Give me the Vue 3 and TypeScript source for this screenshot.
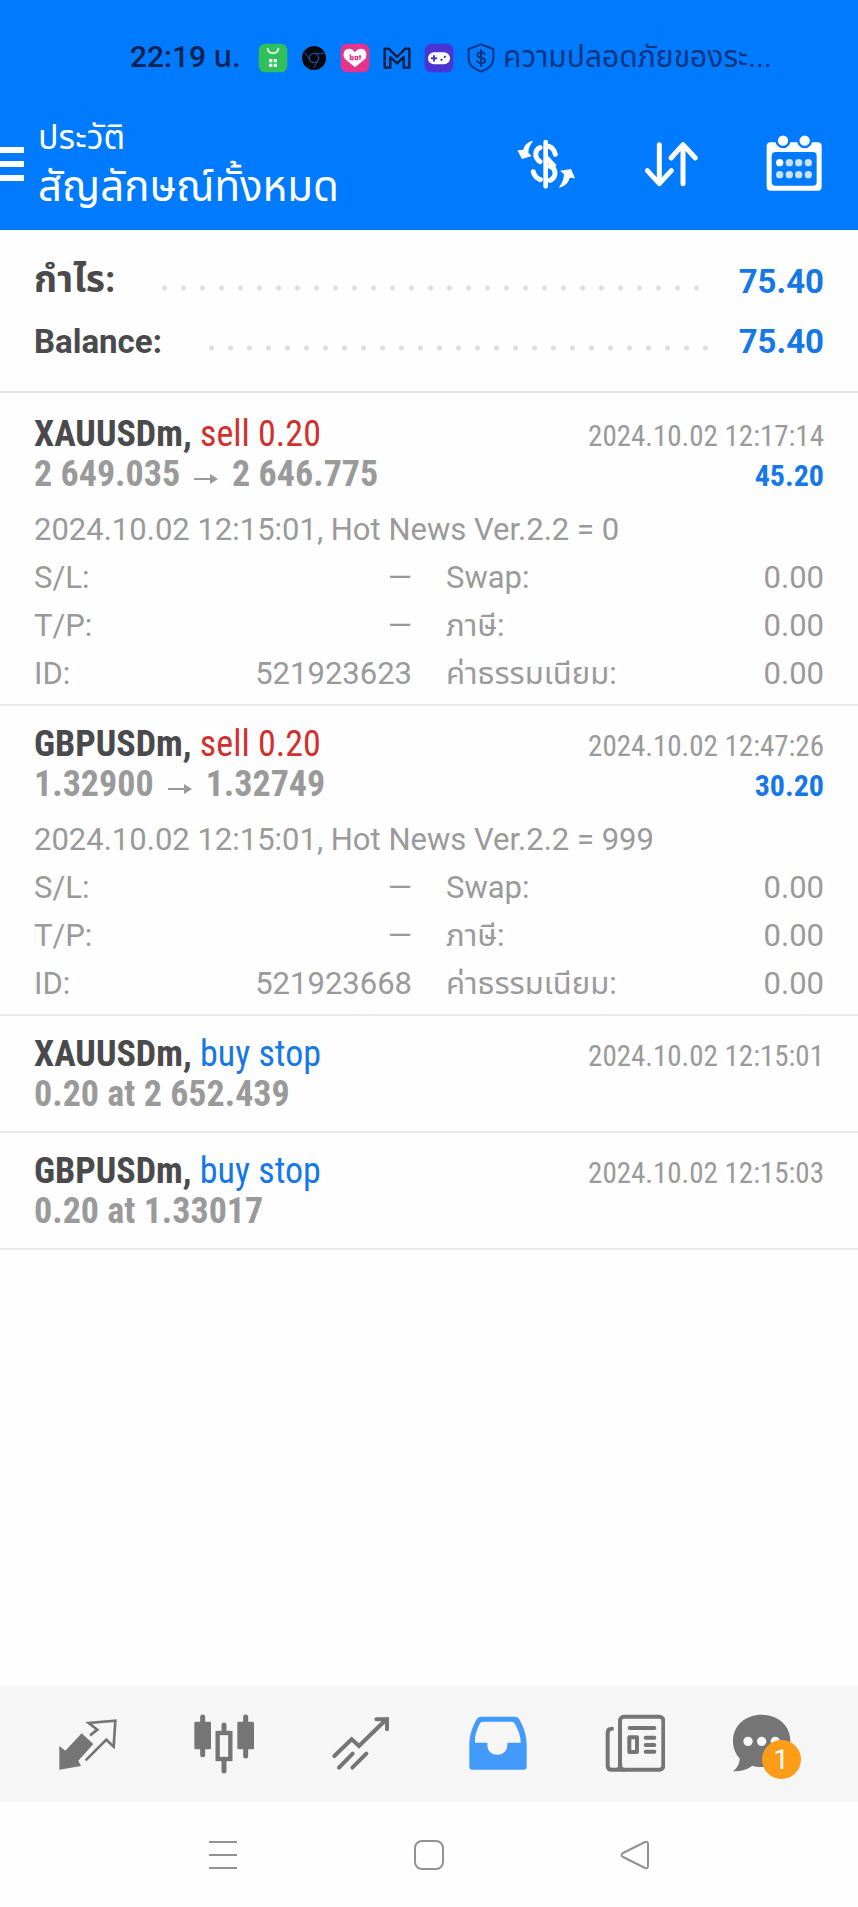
<script setup lang="ts">
interface Detail {
  label: string
  value: string
  label2: string
  value2: string
}

interface Deal {
  symbol: string
  action: string
  side: 'buy' | 'sell'
  prices: string[]
  time: string
  profit?: string
  comment?: string
  details?: Detail[]
}

const summary = [
  { label: 'กำไร:', value: '75.40', thai: true },
  { label: 'Balance:', value: '75.40', thai: false },
]

const details = (id: string): Detail[] => [
  { label: 'S/L:', value: '—', label2: 'Swap:', value2: '0.00' },
  { label: 'T/P:', value: '—', label2: 'ภาษี:', value2: '0.00' },
  { label: 'ID:', value: id, label2: 'ค่าธรรมเนียม:', value2: '0.00' },
]

const deals: Deal[] = [
  {
    symbol: 'XAUUSDm,',
    action: 'sell 0.20',
    side: 'sell',
    prices: ['2 649.035', '2 646.775'],
    time: '2024.10.02 12:17:14',
    profit: '45.20',
    comment: '2024.10.02 12:15:01, Hot News Ver.2.2 = 0',
    details: details('521923623'),
  },
  {
    symbol: 'GBPUSDm,',
    action: 'sell 0.20',
    side: 'sell',
    prices: ['1.32900', '1.32749'],
    time: '2024.10.02 12:47:26',
    profit: '30.20',
    comment: '2024.10.02 12:15:01, Hot News Ver.2.2 = 999',
    details: details('521923668'),
  },
  {
    symbol: 'XAUUSDm,',
    action: 'buy stop',
    side: 'buy',
    prices: ['0.20 at 2 652.439'],
    time: '2024.10.02 12:15:01',
  },
  {
    symbol: 'GBPUSDm,',
    action: 'buy stop',
    side: 'buy',
    prices: ['0.20 at 1.33017'],
    time: '2024.10.02 12:15:03',
  },
]
</script>

<template>
  <div class="screen">
    <header class="top">
      <div class="status">
        <span class="clock">22:19 น.</span>
        <div class="status-icons">
          <svg width="30" height="30" viewBox="0 0 90 90" aria-hidden="true">
            <rect x="2" y="2" width="86" height="86" rx="20" fill="#2fbf5b" />
            <path d="M29 17c2 18 30 18 32 0" fill="none" stroke="#d6f7df" stroke-width="6" stroke-linecap="round" />
            <path d="M33 48h10v10H33zM47 48h10v10H47zM33 62h10v10H33zM47 62h10v10H47z" fill="#eafff0" />
          </svg>
          <svg width="26" height="26" viewBox="0 0 78 78" aria-hidden="true">
            <circle cx="39" cy="39" r="36" fill="#06080f" />
            <circle cx="39" cy="39" r="14" fill="none" stroke="#1a4f96" stroke-width="4" />
            <path d="M39 25h31M27 46 12 22M51 46 38 70" stroke="#1a4f96" stroke-width="3" />
          </svg>
          <svg width="30" height="30" viewBox="0 0 90 90" aria-hidden="true">
            <rect x="2" y="2" width="86" height="86" rx="20" fill="#e8338c" />
            <path d="M45 73 14 47c-8-16 0-30 13-30 9 0 14 5 18 11 4-6 9-11 18-11 13 0 21 14 13 30z" fill="#fff" />
            <path d="M31 34v16M31 42h8v8h-8M46 41h7v9h-7zM60 36v14M57 41h7" fill="none" stroke="#e8338c" stroke-width="4" />
          </svg>
          <svg width="28" height="24" viewBox="0 0 84 72" aria-hidden="true">
            <path d="M5 65V8h12l25 25L67 8h12v57H62V33L42 52 22 33v32z" fill="none" stroke="#061b3d" stroke-width="7" stroke-linejoin="round" />
          </svg>
          <svg width="30" height="30" viewBox="0 0 90 90" aria-hidden="true">
            <rect x="2" y="2" width="86" height="86" rx="20" fill="#4a35d2" />
            <rect x="12" y="28" width="66" height="36" rx="18" fill="#fff" />
            <path d="M23 46h14M30 39v14M52 51l1-1M62 42l1-1" stroke="#4a35d2" stroke-width="6" stroke-linecap="round" />
          </svg>
          <svg width="28" height="30" viewBox="0 0 84 90" aria-hidden="true">
            <path d="M42 4 79 18v30c0 18-16 30-37 38C21 78 5 66 5 48V18z" fill="none" stroke="#06357f" stroke-width="6" stroke-linejoin="round" />
            <path d="M53 33c-3-6-21-8-22 3 0 12 23 5 23 17 0 10-19 10-24 2M42 21v47" fill="none" stroke="#06357f" stroke-width="6" stroke-linecap="round" />
          </svg>
        </div>
        <span class="notice">ความปลอดภัยของระ...</span>
      </div>

      <div class="bar">
        <button class="menu" type="button" aria-label="Menu">
          <svg width="24" height="36" viewBox="0 0 24 36"><path d="M0 5h24M0 19h24M0 33h24" stroke="#fff" stroke-width="6" /></svg>
        </button>
        <div class="titles">
          <span class="caption">ประวัติ</span>
          <h1>สัญลักษณ์ทั้งหมด</h1>
        </div>
        <div class="actions">
          <button type="button" aria-label="Currency">
            <svg width="60" height="60" viewBox="115 68 180 180">
              <path d="M204 95v133" stroke="#fff" stroke-width="14" stroke-linecap="round" />
              <path d="M187 112c-16 6-18 30 0 42M214 108c10 3 16 12 19 24M188 208c-10-4-18-10-21-24M217 168c20 6 20 34 0 42" fill="none" stroke="#fff" stroke-width="15" stroke-linecap="round" />
              <path d="M206 142l26 28" stroke="#fff" stroke-width="15" />
              <path d="M167 91c-18 4-28 14-30 27l-18 2 14 26 29-9-10-9c0-14 5-24 15-37zM243 232c18-4 29-14 33-30l16 2-12-28-33 5 12 11c-1 16-6 27-16 40z" fill="#fff" />
            </svg>
          </button>
          <button type="button" aria-label="Sort">
            <svg width="60" height="60" viewBox="483 68 180 180" fill="none" stroke="#fff" stroke-width="15" stroke-linecap="round" stroke-linejoin="round">
              <path d="M541 103v116M505 181l36 39 36-39M612 220V103M576 143l36-40 37 40" />
            </svg>
          </button>
          <button type="button" aria-label="Calendar">
            <svg width="60" height="60" viewBox="855 68 180 180">
              <rect x="863" y="96" width="165" height="145" rx="12" fill="#fff" />
              <rect x="878" y="125" width="135" height="101" rx="12" fill="#007aff" />
              <g fill="#fff" stroke="#007aff" stroke-width="7">
                <circle cx="912" cy="91" r="19" />
                <circle cx="977" cy="91" r="19" />
              </g>
              <g fill="#fff">
                <circle cx="902" cy="157" r="11" />
                <g fill="#c8e2ff">
                  <circle cx="931" cy="157" r="11" />
                  <circle cx="959" cy="157" r="11" />
                  <circle cx="988" cy="157" r="11" />
                  <circle cx="902" cy="193" r="11" />
                  <circle cx="931" cy="193" r="11" />
                  <circle cx="959" cy="193" r="11" />
                  <circle cx="988" cy="193" r="11" />
                </g>
              </g>
            </svg>
          </button>
        </div>
      </div>
    </header>

    <main>
      <section class="summary">
        <div v-for="row in summary" :key="row.label" class="summary-row">
          <span class="summary-label" :class="{ thai: row.thai }">{{ row.label }}</span>
          <span class="leader"></span>
          <span class="summary-value">{{ row.value }}</span>
        </div>
      </section>

      <section class="deals">
        <article v-for="deal in deals" :key="deal.symbol + deal.time" class="deal" :class="{ order: !deal.details }">
          <div class="line">
            <h2>{{ deal.symbol }} <span :class="deal.side">{{ deal.action }}</span></h2>
            <time>{{ deal.time }}</time>
          </div>
          <div class="line">
            <span class="prices">
              <template v-for="(price, i) in deal.prices" :key="price">
                <svg v-if="i > 0" class="arrow" width="24" height="14" viewBox="0 0 24 14" role="img" aria-label="to">
                  <path d="M0 7h20" stroke="currentColor" stroke-width="2" />
                  <path d="M16 2l8 5-8 5z" fill="currentColor" />
                </svg>
                <span>{{ price }}</span>
              </template>
            </span>
            <span v-if="deal.profit" class="profit">{{ deal.profit }}</span>
          </div>
          <div v-if="deal.details" class="details">
            <p>{{ deal.comment }}</p>
            <div v-for="d in deal.details" :key="d.label" class="pair">
              <div><span>{{ d.label }}</span><span>{{ d.value }}</span></div>
              <div><span>{{ d.label2 }}</span><span>{{ d.value2 }}</span></div>
            </div>
          </div>
        </article>
      </section>
    </main>

    <nav class="tabs">
      <button type="button" aria-label="Quotes">
        <svg width="60" height="60" viewBox="170 130 180 180">
          <path d="M244 188l35 32-45 50 8 16-65 11V226l18 14z" fill="#757575" />
          <path d="M269 194l22-17-26-20 80-7-5 78-22-21-62 62" fill="none" stroke="#757575" stroke-width="8" />
        </svg>
      </button>
      <button type="button" aria-label="Charts">
        <svg width="60" height="60" viewBox="581 130 180 180" fill="#757575" stroke="#757575">
          <path d="M607 139v113M736 139v117M671 163v22M671 268v33" stroke-width="15" stroke-linecap="round" />
          <rect x="582" y="153" width="50" height="83" rx="4" stroke="none" />
          <rect x="711" y="153" width="50" height="83" rx="4" stroke="none" />
          <rect x="652" y="187" width="38" height="78" fill="#f6f6f6" stroke-width="13" />
        </svg>
      </button>
      <button type="button" aria-label="Trade">
        <svg width="60" height="60" viewBox="992 130 180 180" fill="none" stroke="#757575" stroke-width="12" stroke-linecap="round">
          <path d="M1002 256l52-50 22 20 83-81M1128 146h32v30M1016 291l41-42M1056 291l42-42" />
        </svg>
      </button>
      <button type="button" aria-label="History" aria-current="page">
        <svg width="60" height="60" viewBox="114 130 180 180">
          <path fill-rule="evenodd" d="M152 138h104q8 0 12 8c14 26 22 48 22 76v66q0 9-9 9H127q-9 0-9-9v-66c0-28 8-50 22-76q4-8 12-8zM160 153c-8 0-10 5-13 11-8 18-13 32-12 52h37v8c0 38 60 38 60 0v-8h40c0-20-6-34-15-52-3-6-5-11-13-11z" fill="#429bfb" />
        </svg>
      </button>
      <button type="button" aria-label="News">
        <svg width="60" height="60" viewBox="525 130 180 180" fill="none" stroke="#757575" stroke-width="12" stroke-linejoin="round">
          <rect x="570" y="138" width="130" height="159" rx="12" />
          <path d="M546 174q-13 0-13 13v98q0 12 12 12h37M571 280v4q0 13-12 13M599 172h74M647 201h26M647 223h26M647 243h26" stroke-linecap="round" />
          <rect x="598" y="200" width="23" height="44" />
        </svg>
      </button>
      <button type="button" aria-label="Messages, 1 new">
        <span class="chat">
          <svg width="80" height="60" viewBox="904 130 240 180">
            <path d="M993 132c48 0 86 32 86 78s-38 79-86 79c-10 0-19-1-28-4-16 12-35 18-58 17 12-9 20-22 20-39-13-14-20-32-20-53 0-46 38-78 86-78z" fill="#757575" />
            <g fill="#f6f6f6">
              <circle cx="952" cy="212" r="14" />
              <circle cx="993" cy="212" r="14" />
              <circle cx="1034" cy="212" r="14" />
            </g>
          </svg>
          <span class="badge">1</span>
        </span>
      </button>
    </nav>

    <nav class="system">
      <button type="button" aria-label="Recent apps">
        <svg width="30" height="30" viewBox="0 0 30 30" stroke="#929292" stroke-width="2"><path d="M1 2h28M1 15h28M1 28h28" /></svg>
      </button>
      <button type="button" aria-label="Home">
        <svg width="30" height="30" viewBox="0 0 30 30" fill="none" stroke="#929292" stroke-width="2"><rect x="1" y="1" width="28" height="28" rx="7" /></svg>
      </button>
      <button type="button" aria-label="Back">
        <svg width="30" height="30" viewBox="0 0 30 30" fill="none" stroke="#929292" stroke-width="2" stroke-linejoin="round"><path d="M3 13 25 2q3-1 3 2v22q0 3-3 2L3 17q-3-2 0-4z" /></svg>
      </button>
    </nav>
  </div>
</template>

<style>
body {
  margin: 0;
  background: #fefefe;
}
</style>

<style scoped>
.screen {
  display: flex;
  flex-direction: column;
  min-height: 100vh;
  background: #fefefe;
  color: #9a9a9a;
  font-family: Roboto, "Noto Sans Thai", "Noto Sans", sans-serif;
}

button {
  display: flex;
  align-items: center;
  justify-content: center;
  padding: 0;
  border: 0;
  background: none;
  font: inherit;
  color: inherit;
}

svg {
  display: block;
  flex: none;
}

h1,
h2,
p {
  margin: 0;
  font-weight: 400;
}

.top {
  background: #007aff;
  color: #fff;
}

.status {
  display: flex;
  align-items: center;
  height: 96px;
  padding: 20px 34px 0 130px;
  box-sizing: border-box;
  white-space: nowrap;
}

.clock {
  width: 128px;
  color: #04214f;
  font-size: 30px;
  font-weight: 500;
}

.status-icons {
  display: flex;
  align-items: center;
  gap: 13px;
}

.notice {
  margin-left: 8px;
  color: #06357f;
  font-size: 30px;
}

.bar {
  display: flex;
  align-items: center;
  height: 134px;
  padding-right: 34px;
}

.menu {
  width: 24px;
}

.titles {
  flex: 1;
  margin-left: 14px;
  white-space: nowrap;
}

.caption {
  display: block;
  font-size: 34px;
  line-height: 48px;
}

h1 {
  font-size: 42px;
  line-height: 52px;
}

.actions {
  display: flex;
  gap: 64px;
}

.summary {
  padding: 21px 34px 20px;
  border-bottom: 2px solid #e9e9e9;
}

.summary-row {
  display: flex;
  align-items: center;
  height: 60px;
  font-size: 33px;
  font-weight: 700;
}

.summary-label {
  color: #4a4a4c;
}

.thai {
  font-size: 37px;
}

.leader {
  flex: 1;
  height: 6px;
  margin: 14px 28px 0 40px;
  background: radial-gradient(circle at center, #dedede 2px, transparent 3px) 0 0 / 19px 6px repeat-x;
}

.summary-value,
.profit {
  color: #1677e6;
}

.deals {
  padding-top: 3px;
}

.deal {
  padding: 18px 34px 6px;
  border-bottom: 2px solid #e9e9e9;
}

.order {
  padding-bottom: 17px;
}

.line {
  display: flex;
  justify-content: space-between;
  align-items: baseline;
  height: 40px;
  font-family: "Roboto Condensed", "Liberation Sans Narrow", Roboto, sans-serif;
  font-size: 36px;
  line-height: 40px;
  white-space: nowrap;
}

h2 {
  color: #4a4a4c;
  font-size: 36px;
  font-weight: 700;
}

.sell {
  color: #d32f2f;
  font-weight: 400;
}

.buy {
  color: #1677e6;
  font-weight: 400;
}

time {
  font-size: 29px;
}

.prices {
  display: flex;
  align-items: baseline;
  gap: 14px;
  font-weight: 700;
}

.profit {
  font-size: 30px;
  font-weight: 700;
}

.details {
  margin-top: 12px;
  font-size: 31px;
  line-height: 48px;
}

.pair {
  display: grid;
  grid-template-columns: 1fr 1fr;
  gap: 34px;
  height: 48px;
}

.pair div {
  display: flex;
  justify-content: space-between;
}

.tabs {
  display: grid;
  grid-template-columns: repeat(6, 1fr);
  height: 117px;
  margin-top: auto;
  padding: 0 18px;
  background: #f6f6f6;
}

.chat {
  position: relative;
}

.badge {
  position: absolute;
  left: 30px;
  top: 26px;
  width: 39px;
  height: 39px;
  border-radius: 50%;
  background: #fd9c17;
  color: #fff;
  font-size: 28px;
  line-height: 39px;
  text-align: center;
}

.system {
  display: grid;
  grid-template-columns: repeat(3, 1fr);
  height: 105px;
  padding: 0 14%;
}
</style>
